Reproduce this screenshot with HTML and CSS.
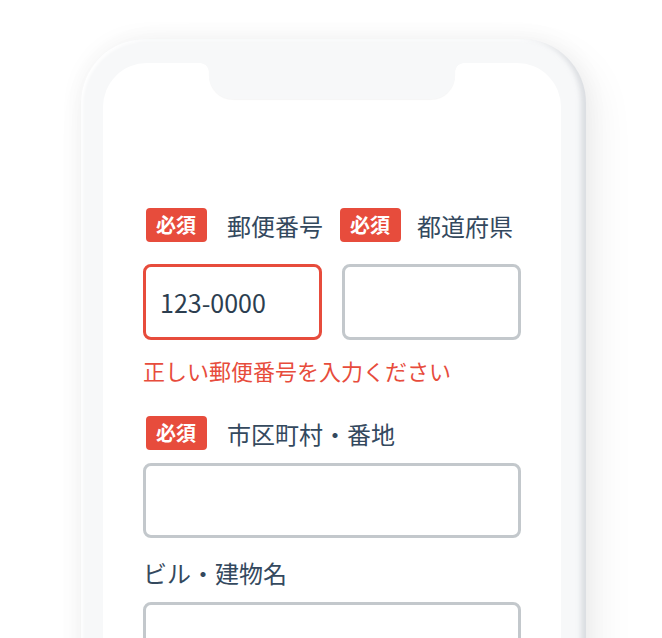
FILE: index.html
```html
<!DOCTYPE html>
<html lang="ja">
<head>
    <meta charset="UTF-8">
    <meta name="viewport" content="width=device-width, initial-scale=1.0">
    <title>住所入力</title>
    <link rel="stylesheet" href="styles.css">
</head>
<body>

    <div class="stage">
        <div class="phone">
            <div class="screen">
                <div class="notch"></div>

                <form class="address-form">
                    <div class="label-row">
                        <span class="badge">必須</span>
                        <span class="label-text label-first">郵便番号</span>
                        <span class="badge">必須</span>
                        <span class="label-text">都道府県</span>
                    </div>
                    <div class="input-row">
                        <input class="field field-error" type="text" value="123-0000">
                        <input class="field" type="text">
                    </div>
                    <p class="error-text">正しい郵便番号を入力ください</p>

                    <div class="label-row label-row-city">
                        <span class="badge">必須</span>
                        <span class="label-text label-first">市区町村・番地</span>
                    </div>
                    <input class="field field-wide" type="text">

                    <div class="label-plain">ビル・建物名</div>
                    <input class="field field-wide" type="text">
                </form>
            </div>
        </div>
    </div>

</body>
</html>
```

FILE: styles.css
```css
* {
    margin: 0;
    padding: 0;
    box-sizing: border-box;
    font-family: "Noto Sans CJK JP", "Lato", sans-serif;
}

body {
    background-color: white;
    color: #34495e;
    overflow: hidden;
    height: 638px;
}

.stage {
    padding: 39px 0 0 81px;
}

.phone {
    width: 505px;
    height: 700px;
    padding: 24px 25px 0 22px;
    background-color: #f7f8f9;
    border-radius: 64px;
    box-shadow:
        0 0 24px rgba(0, 0, 0, 0.05),
        12px 14px 40px rgba(0, 0, 0, 0.06),
        inset -5px -2px 5px rgba(168, 176, 184, 0.35),
        inset 2px 2px 3px rgba(255, 255, 255, 0.9);
}

.screen {
    position: relative;
    height: 100%;
    background-color: white;
    border-radius: 44px 44px 0 0;
    padding: 145px 39px 0 40px;
}

/* notch sits over the top of the screen */
.notch {
    position: absolute;
    top: 0;
    left: 50%;
    width: 246px;
    height: 36px;
    margin-left: -123px;
    background-color: #f7f8f9;
    border-radius: 0 0 24px 24px;
    box-shadow: 0 1px 1px rgba(0, 0, 0, 0.04);
}

.notch::before,
.notch::after {
    content: "";
    position: absolute;
    top: 0;
    width: 9px;
    height: 9px;
}

.notch::before {
    left: -9px;
    background: radial-gradient(circle at 0 100%, transparent 8.5px, #f7f8f9 9px);
}

.notch::after {
    right: -9px;
    background: radial-gradient(circle at 100% 100%, transparent 8.5px, #f7f8f9 9px);
}

.address-form {
    display: flex;
    flex-direction: column;
    width: 378px;
}

.label-row {
    display: flex;
    align-items: center;
    gap: 16px;
    padding-left: 3px;
    height: 34px;
}

.badge {
    display: inline-block;
    height: 34px;
    line-height: 33px;
    padding: 0 11px 0 10px;
    background-color: #e74c3c;
    color: white;
    font-size: 20px;
    font-weight: bold;
    border-radius: 4px;
}

.label-text,
.label-plain {
    font-size: 24px;
    color: #34495e;
}

.label-first {
    margin: 0 1px 0 4px;
}

.input-row {
    display: flex;
    gap: 20px;
    margin-top: 22px;
}

.field {
    width: 179px;
    height: 76px;
    border: 3px solid #c3c8cc;
    border-radius: 8px;
    padding: 0 14px;
    font-size: 25px;
    color: #2c3e50;
    background: white;
    outline: none;
}

.field-error {
    border-color: #e74c3c;
}

.field-wide {
    width: 378px;
    height: 75px;
}

.error-text {
    margin-top: 14px;
    font-size: 22px;
    line-height: 32px;
    color: #e74c3c;
}

.label-row-city {
    margin-top: 30px;
    margin-bottom: 13px;
}

.label-plain {
    margin-top: 18px;
    margin-bottom: 12px;
    line-height: 34px;
}
```
